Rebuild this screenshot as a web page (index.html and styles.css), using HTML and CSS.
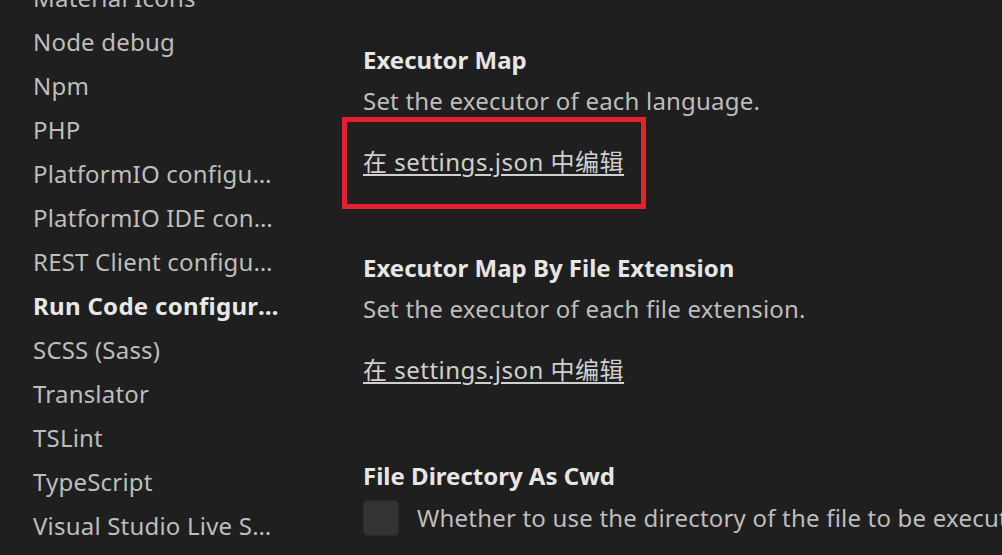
FILE: index.html
```html
<!DOCTYPE html>
<html lang="zh">
<head>
<meta charset="utf-8">
<link rel="stylesheet" href="styles.css">
</head>
<body>
<div class="page">
  <nav class="toc">
    <div class="toc-item">Material Icons</div>
    <div class="toc-item">Node debug</div>
    <div class="toc-item">Npm</div>
    <div class="toc-item">PHP</div>
    <div class="toc-item">PlatformIO configuration</div>
    <div class="toc-item">PlatformIO IDE configuration</div>
    <div class="toc-item">REST Client configuration</div>
    <div class="toc-item active">Run Code configuration</div>
    <div class="toc-item">SCSS (Sass)</div>
    <div class="toc-item">Translator</div>
    <div class="toc-item">TSLint</div>
    <div class="toc-item">TypeScript</div>
    <div class="toc-item">Visual Studio Live Share</div>
  </nav>
  <main class="settings">
    <section class="setting">
      <div class="title">Executor Map</div>
      <div class="desc">Set the executor of each language.</div>
      <div class="link-wrap highlighted"><a class="link" href="#">在 settings.json 中编辑</a></div>
    </section>
    <section class="setting">
      <div class="title">Executor Map By File Extension</div>
      <div class="desc">Set the executor of each file extension.</div>
      <div class="link-wrap"><a class="link" href="#">在 settings.json 中编辑</a></div>
    </section>
    <section class="setting last">
      <div class="title">File Directory As Cwd</div>
      <div class="check-row">
        <span class="checkbox"></span>
        <span class="check-label">Whether to use the directory of the file to be executed as the working directory.</span>
      </div>
    </section>
  </main>
</div>
</body>
</html>
```
FILE: styles.css
```css
html, body {
  margin: 0;
  padding: 0;
  background: #1f1f1f;
  overflow: hidden;
}
body {
  width: 1002px;
  height: 555px;
  font-family: "Noto Sans", "Noto Sans CJK SC", sans-serif;
  font-size: 24px;
  letter-spacing: 0.2px;
  color: #bdbdbd;
}
.page {
  display: flex;
  height: 555px;
  overflow: hidden;
}
.toc {
  width: 248px;
  padding-left: 33px;
  margin-top: -24px;
  flex: none;
}
.toc-item {
  height: 44px;
  line-height: 44px;
  white-space: nowrap;
  overflow: hidden;
  text-overflow: ellipsis;
  color: #bdbdbd;
}
.toc-item.active {
  font-weight: bold;
  letter-spacing: 0.3px;
  color: #e8e8e8;
}
.settings {
  flex: 1;
  padding-left: 82px;
  padding-top: 45px;
  min-width: 0;
  white-space: nowrap;
  overflow: hidden;
}
.setting {
  margin-bottom: 76px;
}
.title {
  line-height: 30px;
  font-weight: bold;
  letter-spacing: 0;
  color: #e6e6e6;
}
.desc {
  line-height: 30px;
  margin-top: 11px;
  color: #bdbdbd;
}
.link-wrap {
  position: relative;
  margin-top: 31px;
  line-height: 30px;
}
.link {
  color: #cfcfcf;
  letter-spacing: 0.5px;
  text-decoration: underline;
  text-underline-offset: 3px;
}
.highlighted::after {
  content: "";
  position: absolute;
  left: -21px;
  top: -30px;
  width: 294px;
  height: 82px;
  border: 5px solid #e3202b;
}
.check-row {
  display: flex;
  align-items: center;
  gap: 18px;
  margin-top: 9px;
}
.checkbox {
  width: 34px;
  height: 34px;
  flex: none;
  border: 1px solid #2b2b2b;
  border-radius: 5px;
  background: #333333;
}
.check-label {
  line-height: 36px;
  color: #bdbdbd;
}
```
